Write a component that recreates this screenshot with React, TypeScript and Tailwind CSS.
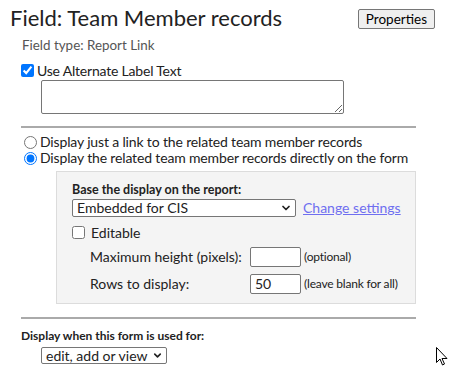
import { ChevronDown } from 'lucide-react';

function Cursor() {
  return (
    <svg width="13" height="20" viewBox="0 0 13 20" className="absolute left-[436px] top-[347px]">
      <path d="M0.5 0.5 L0.5 15.5 L4 12 L6.5 18 L8.5 17 L6 11.5 L11 11.5 Z" fill="white" stroke="black" strokeWidth="1" />
    </svg>
  );
}

function App() {
  return (
    <div className="relative w-[458px] h-[379px] bg-white font-['Lato',sans-serif] text-[#222]">
      <div className="flex items-start justify-between pl-[10px] pr-[23px] pt-[4px]">
        <h1 className="text-[22px] leading-[28px] text-[#222] whitespace-nowrap">Field: Team Member records</h1>
        <button className="mt-[5px] h-[20px] px-[7px] text-[13.5px] leading-[16px] text-black bg-[#efefef] border border-[#767676] rounded-[2px]">
          Properties
        </button>
      </div>

      <div className="pl-[21px] pr-[42px]">
        <p className="pl-px mt-[5px] text-[13.4px] leading-[16px] text-[#555]">Field type: Report Link</p>

        <label className="mt-[9px] flex items-center gap-[3px] text-[14px] leading-[17px] tracking-[-0.2px]">
          <input type="checkbox" defaultChecked className="m-0 w-[13px] h-[13px] accent-[#0075ff]" />
          Use Alternate Label Text
        </label>
        <textarea className="block ml-[20px] mt-px w-[303px] h-[34px] border border-[#767676] rounded-[2px] resize" />

        <div className="mt-[12px] border-t-2 border-[#aaa]" />

        <div className="mt-[6px] pl-[3px] text-[14px] leading-[16px] tracking-[-0.15px] whitespace-nowrap">
          <label className="flex items-center gap-[3px]">
            <input type="radio" name="disp" className="m-0 w-[13px] h-[13px]" />
            Display just a link to the related team member records
          </label>
          <label className="flex items-center gap-[3px]">
            <input type="radio" name="disp" defaultChecked className="m-0 w-[13px] h-[13px] accent-[#0075ff]" />
            Display the related team member records directly on the form
          </label>
        </div>

        <div className="ml-[35px] mt-[5px] h-[133px] bg-[#f4f4f4] border border-[#dcdcdc] pl-[15px] pt-[10px]">
          <p className="text-[12.5px] leading-[15px] font-bold whitespace-nowrap">Base the display on the report:</p>
          <div className="flex items-center gap-[7px]">
            <div className="flex items-center justify-between w-[224px] h-[18px] bg-white border border-[#767676] rounded-[2px] pl-[4px] pr-[3px] text-[14px]">
              <span>Embedded for CIS</span>
              <ChevronDown size={12} strokeWidth={3.5} />
            </div>
            <a href="#" className="text-[14px] text-[#6f6ff0] underline">Change settings</a>
          </div>
          <label className="mt-[6px] flex items-center gap-[6px] text-[14px] leading-[17px]">
            <input type="checkbox" className="m-0 w-[13px] h-[13px]" />
            Editable
          </label>
          <div className="mt-[5px] flex flex-col gap-[6px] pl-[18px] text-[14px]">
            <div className="flex items-center">
              <span className="w-[160px]">Maximum height (pixels):</span>
              <input className="w-[51px] h-[20px] bg-white border border-[#767676] rounded-[2px]" />
              <span className="ml-[3px] text-[12px] tracking-[-0.2px]">(optional)</span>
            </div>
            <div className="flex items-center">
              <span className="w-[160px]">Rows to display:</span>
              <input defaultValue="50" className="w-[51px] h-[20px] px-[4px] bg-white border border-[#767676] rounded-[2px] text-[14px]" />
              <span className="ml-[3px] text-[12px] tracking-[-0.2px]">(leave blank for all)</span>
            </div>
          </div>
        </div>

        <div className="mt-[13px] border-t-2 border-[#aaa]" />

        <p className="mt-[10px] text-[12px] leading-[14px] font-bold">Display when this form is used for:</p>
        <div className="ml-[20px] mt-[1px] inline-flex items-center gap-[4px] h-[17px] bg-white border border-[#767676] rounded-[2px] pl-[4px] pr-[3px] text-[14px]">
          <span>edit, add or view</span>
          <ChevronDown size={11} strokeWidth={3.5} />
        </div>
      </div>

      <Cursor />
    </div>
  );
}

export default App;
